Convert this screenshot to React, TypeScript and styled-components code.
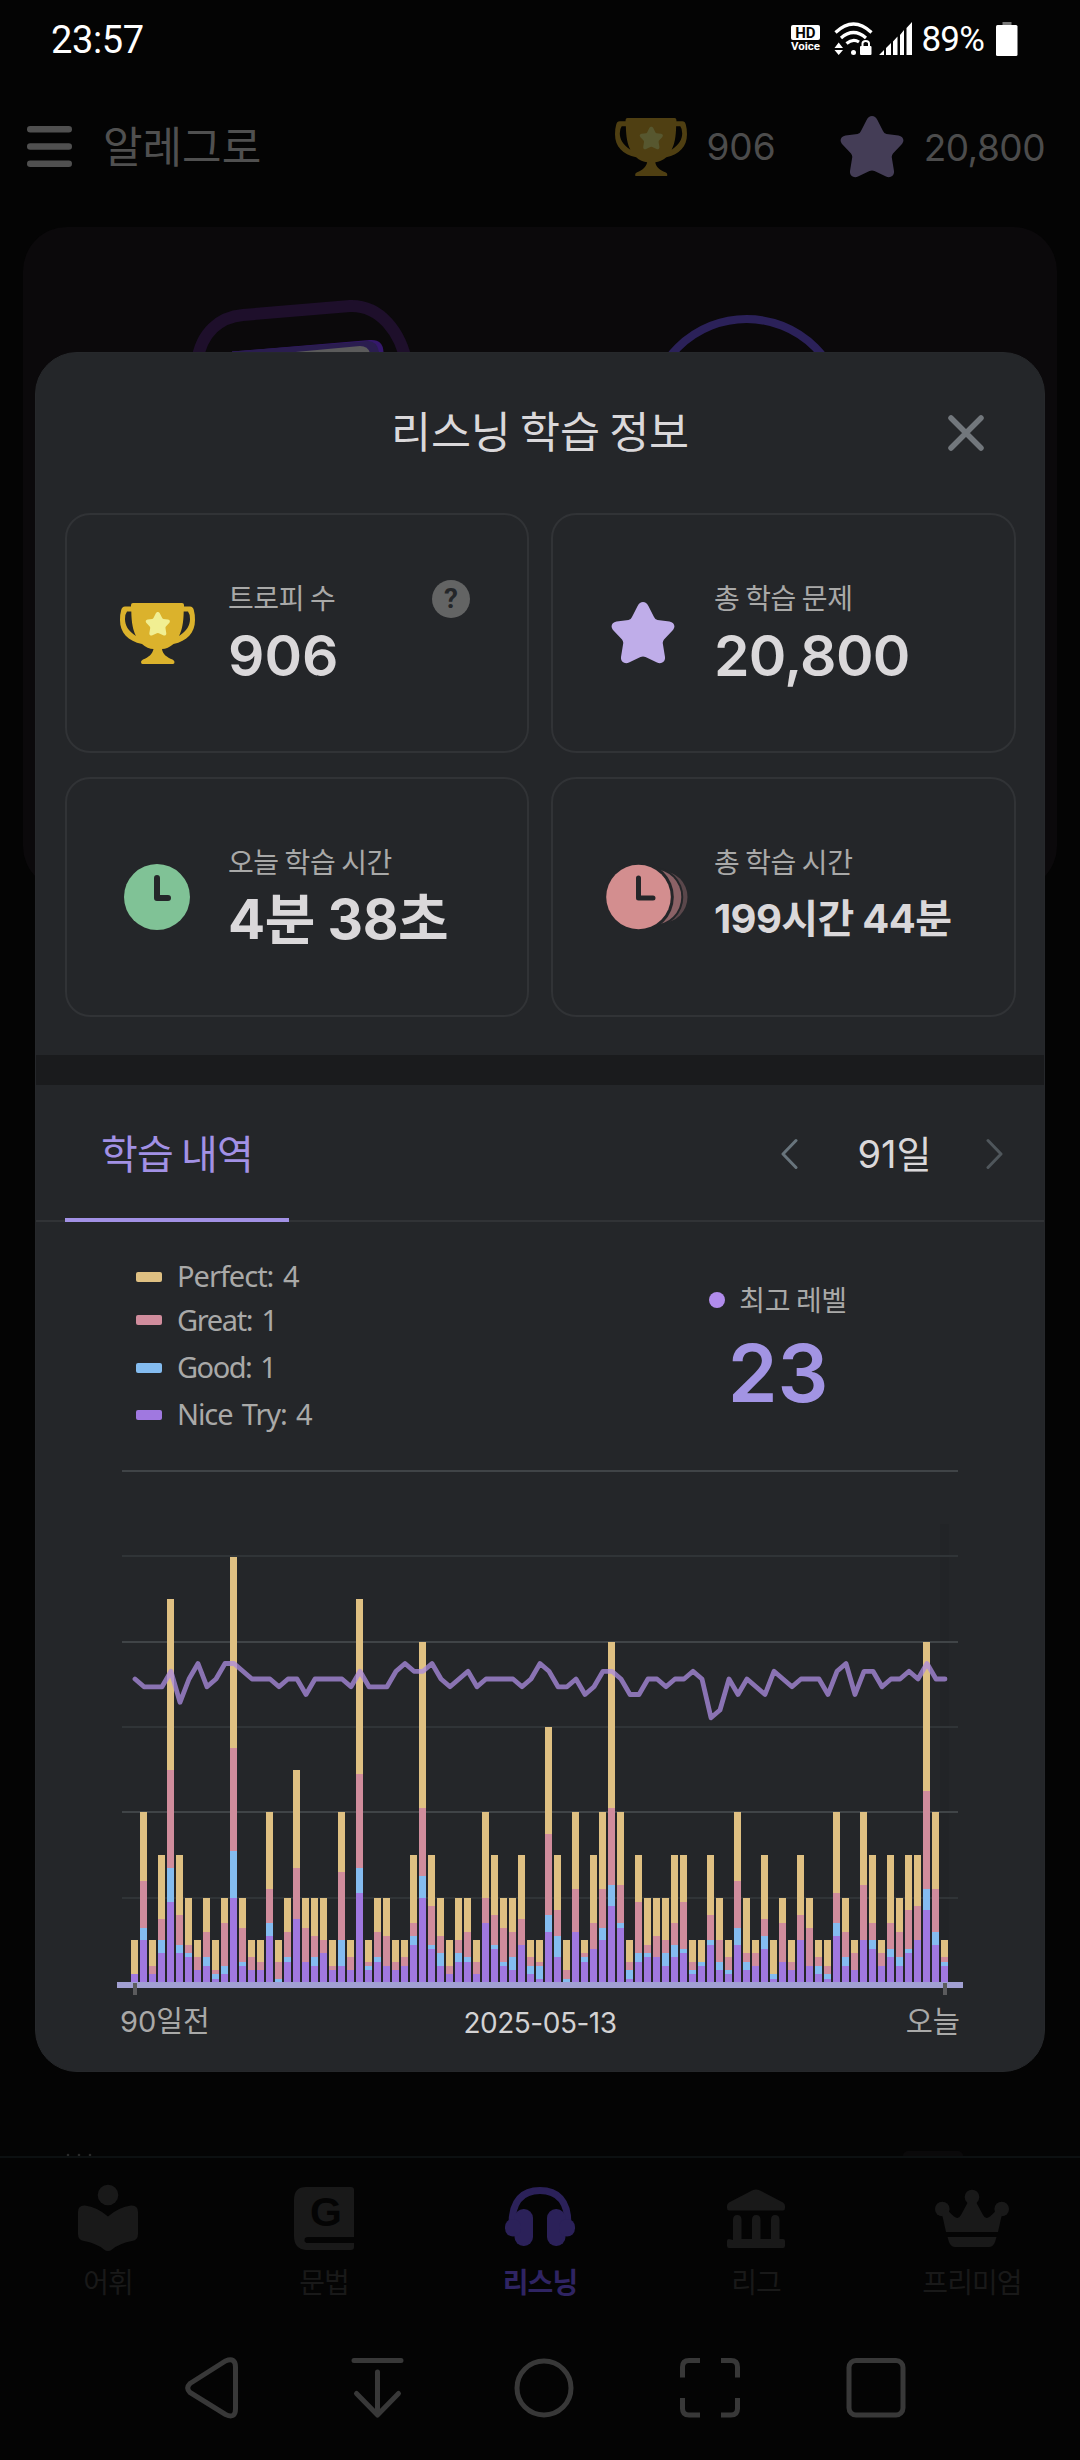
import React from 'react';
import styled, { createGlobalStyle } from 'styled-components';

const sans = `Inter, "Noto Sans CJK KR", sans-serif`;
const korean = `"Noto Sans CJK KR", sans-serif`;

const GlobalStyle = createGlobalStyle`
  * { box-sizing: border-box; }
  body { margin: 0; background: #040404; }
`;

const Screen = styled.div`
  position: relative;
  width: 1080px;
  height: 2460px;
  overflow: hidden;
  display: flex;
  flex-direction: column;
  background: #040404;
  font-family: ${sans};
`;

const Label = styled.span<{
  $size: number;
  $color: string;
  $weight?: number;
  $ls?: number;
  $ws?: number;
  $lh?: number;
  $font?: string;
  $padTop?: number;
  $padBottom?: number;
}>`
  display: block;
  box-sizing: content-box;
  font-family: ${p => p.$font ?? sans};
  font-size: ${p => p.$size}px;
  font-weight: ${p => p.$weight ?? 400};
  color: ${p => p.$color};
  letter-spacing: ${p => p.$ls ?? 0}px;
  word-spacing: ${p => p.$ws ?? 0}px;
  line-height: ${p => p.$lh ?? p.$size}px;
  padding-top: ${p => p.$padTop ?? 0}px;
  padding-bottom: ${p => p.$padBottom ?? 0}px;
  white-space: nowrap;
`;

/* ---------- Status bar ---------- */
const StatusBar = styled.div`
  height: 80px;
  display: flex;
  align-items: center;
  justify-content: space-between;
  padding: 0 62px 3px 51px;
`;
const StatusIcons = styled.div`
  display: flex;
  align-items: center;
`;
const HdBadge = styled.div`
  display: flex;
  flex-direction: column;
  align-items: center;
  width: 30px;
  margin-right: 14px;
`;
const HdBox = styled.div`
  width: 29px;
  height: 15px;
  border-radius: 2px;
  background: #fff;
  color: #040404;
  font: 700 15px/16px Roboto, sans-serif;
  text-align: center;
`;
const HdVoice = styled.div`
  color: #fff;
  font: 700 11.5px/13px Roboto, sans-serif;
`;

/* ---------- App header ---------- */
const Header = styled.header`
  height: 147px;
  display: flex;
  align-items: center;
  padding: 0 35px 13px 27px;
`;
const Counter = styled.div<{ $gap: number; $ml?: string }>`
  display: flex;
  align-items: center;
  gap: ${p => p.$gap}px;
  margin-left: ${p => p.$ml ?? '0'};
`;
const HeroCard = styled.section`
  margin: 0 23px;
  height: 663px;
  border-radius: 44px;
  background: #0b090b;
`;
const HeroArt = styled.svg`
  display: block;
`;
const PageRest = styled.div`
  flex: 1;
  display: flex;
  align-items: flex-end;
  justify-content: space-between;
  padding: 0 117px 0 65px;
`;
const PeekButton = styled.div`
  width: 60px;
  height: 5px;
  border-radius: 5px 5px 0 0;
  background: #0a090a;
`;

/* ---------- Bottom navigation ---------- */
const TabBar = styled.nav`
  height: 161px;
  border-top: 2px solid #0c1011;
  display: grid;
  grid-template-columns: repeat(5, 1fr);
`;
const TabItem = styled.div`
  display: flex;
  flex-direction: column;
  align-items: center;
  padding-top: 25px;
  gap: 11px;
`;
const SystemBar = styled.div`
  height: 143px;
  display: flex;
  justify-content: space-between;
  padding: 39px 174px 0 182px;
`;
const LetterIcon = styled.div`
  position: relative;
  height: 70px;
  width: 76px;
`;
const Letter = styled.span`
  position: absolute;
  left: 24px;
  top: 9px;
  font: 800 41px/41px "Liberation Sans", sans-serif;
  color: #040404;
`;

/* ---------- Modal ---------- */
const Modal = styled.section`
  position: absolute;
  left: 35px;
  top: 352px;
  width: 1010px;
  height: 1720px;
  border-radius: 42px;
  border: 1px solid #26282b;
  background: #242629;
  display: flex;
  flex-direction: column;
  overflow: hidden;
`;
const ModalHeader = styled.div`
  height: 160px;
  display: grid;
  grid-template-columns: 157px 1fr 157px;
  align-items: center;
  justify-items: center;
`;
const StatGrid = styled.div`
  display: grid;
  grid-template-columns: 464px 465px;
  grid-auto-rows: 240px;
  gap: 24px 22px;
  padding: 0 29px;
`;
const StatCard = styled.div`
  border: 2px solid #313336;
  border-radius: 25px;
  display: flex;
  align-items: center;
`;
const IconCell = styled.div`
  width: 84px;
  margin-left: 48px;
  margin-right: 29px;
  display: flex;
  justify-content: center;
  svg { flex-shrink: 0; }
`;
const StatText = styled.div`
  flex: 1;
  height: 106px;
  display: flex;
  flex-direction: column;
`;
const StatTop = styled.div`
  display: flex;
  align-items: center;
  justify-content: space-between;
  height: 38px;
  flex-shrink: 0;
  padding-right: 57px;
`;
const StatValue = styled.div`
  height: 74px;
  flex-shrink: 0;
  display: flex;
  align-items: center;
`;
const Help = styled.div`
  width: 38px;
  height: 38px;
  border-radius: 50%;
  background: #636464;
  color: #242629;
  text-align: center;
  font: 700 28px/38px Roboto, sans-serif;
`;
const Band = styled.div`
  height: 30px;
  margin-top: 38px;
  background: #1a1b1d;
`;
const TabRow = styled.div`
  height: 137px;
  border-bottom: 2px solid #313336;
  display: flex;
  justify-content: space-between;
  padding: 0 41px 0 29px;
`;
const ActiveTab = styled.div`
  width: 224px;
  height: 137px;
  border-bottom: 4px solid #a291e5;
  display: flex;
  align-items: center;
  justify-content: center;
`;
const Pager = styled.div`
  display: flex;
  align-items: center;
  width: 222px;
  justify-content: space-between;
  height: 137px;
`;
const PagerValue = styled.div`
  padding-left: 5px;
`;
const Summary = styled.div`
  height: 242px;
  display: flex;
  justify-content: space-between;
`;
const Legend = styled.div`
  display: flex;
  flex-direction: column;
  padding: 33px 0 0 100px;
`;
const LegendRow = styled.div<{ $h: number }>`
  display: flex;
  align-items: center;
  gap: 15px;
  height: ${p => p.$h}px;
`;
const Swatch = styled.i<{ $c: string }>`
  width: 26px;
  height: 10px;
  border-radius: 2px;
  background: ${p => p.$c};
`;
const Best = styled.div`
  width: 200px;
  margin-right: 166px;
  padding-top: 58px;
  display: flex;
  flex-direction: column;
  align-items: center;
`;
const BestTop = styled.div`
  display: flex;
  align-items: center;
  gap: 14px;
  height: 40px;
  margin-bottom: 13px;
`;
const Dot = styled.i`
  width: 16px;
  height: 16px;
  border-radius: 50%;
  background: #b18cec;
`;
const ChartSvg = styled.svg`
  display: block;
  margin-left: 81px;
`;
const AxisLabels = styled.div`
  display: grid;
  grid-template-columns: 1fr auto 1fr;
  align-items: center;
  height: 46px;
  padding: 0 84px 0 84px;
`;
const AxisEnd = styled.div`
  display: flex;
  justify-content: flex-end;
`;

/* ---------- Icons ---------- */
const starPath =
  'M26.6 4C29 -1.3 35 -1.3 37.4 4L43 15Q44 17.5 46.5 18L58.5 19.5C63.5 20.3 65 25 61.5 28.5L53 37.5Q51.5 39.5 51.8 41.5L54 55C54.5 60 50 62.5 46 60.5L34.5 55Q32 54 29.5 55L18 60.5C14 62.5 9.5 60 10 55L12.2 41.5Q12.5 39.5 11 37.5L2.5 28.5C-1 25 .5 20.3 5.5 19.5L17.5 18Q20 17.5 21 15Z';

const Star = ({ color }: { color: string }) => (
  <svg width="64" height="62" viewBox="0 0 64 62"><path d={starPath} fill={color} /></svg>
);

const Trophy = ({ w, cup, star }: { w: number; cup: string; star: string }) => (
  <svg width={w} height={(w * 61) / 75} viewBox="0 0 75 61">
    <path
      fill={cup}
      fillRule="evenodd"
      d="M11 2Q11 0 13 0H62Q64 0 64 2V3.5H70Q73 3.5 73.8 7Q75 11 75 17C75 30 67 38 53.500 41C50 44 45.500 46 42 46C42.500 51 47 54.500 52.500 56.500Q54.500 57.500 54.500 59Q54.500 61 53 61H22.500Q21 61 21 59Q21 57.500 23 56.500C28.500 54.500 32.500 51 33.500 46C30 46 25 44 22 41C8 38 0 30 0 17Q0 11 1.200 7Q2 3.500 5 3.500H11ZM7 8.500H11.300C11.500 20 13 27 16 33C8 28 5 22 5 16Q5 11 7 8.500ZM68 8.500H63.700C63.500 20 62 27 59 33C67 28 70 22 70 16Q70 11 68 8.500Z"
    />
    <path d={starPath} fill={star} transform="translate(25.5 9) scale(.385)" />
  </svg>
);

const TodayClock = () => (
  <svg width="66" height="66" viewBox="0 0 66 66">
    <circle cx="33" cy="33" r="33" fill="#80c296" />
    <path d="M33 14V34H44" fill="none" stroke="#242629" strokeWidth="6" strokeLinecap="round" strokeLinejoin="round" />
  </svg>
);

const TotalClock = () => (
  <svg width="90" height="66" viewBox="-8 0 90 66">
    <circle cx="55.500" cy="33" r="26" fill="#5a474b" />
    <circle cx="47.300" cy="33" r="30" fill="#242629" />
    <circle cx="47.300" cy="33" r="28" fill="#8b6266" />
    <circle cx="32.500" cy="33" r="35.300" fill="#242629" />
    <circle cx="32.500" cy="33" r="32.300" fill="#d38e8f" />
    <path d="M32.500 14V34H47" fill="none" stroke="#242629" strokeWidth="5" strokeLinecap="round" strokeLinejoin="round" />
  </svg>
);

const Chevron = ({ right, color }: { right?: boolean; color: string }) => (
  <svg width="17" height="32" viewBox="0 0 17 32">
    <path d={right ? 'M2 2.500L15 16L2 29.500' : 'M15 2.500L2 16L15 29.500'} fill="none" stroke={color} strokeWidth="3" strokeLinecap="round" strokeLinejoin="round" />
  </svg>
);

const WifiIcon = () => (
  <svg width="40" height="34" viewBox="0 0 40 34" fill="none">
    <g stroke="#fff" strokeWidth="3.200">
      <path d="M1.500 10.500Q19.500 -6.500 37.500 10.500" />
      <path d="M7 16Q19.500 5 32 16" />
      <path d="M12.500 21.500Q19 16 25 20" />
    </g>
    <circle cx="19.500" cy="30.500" r="2.500" fill="#fff" />
    <path d="M.5 26L4.700 20.500L9 26ZM.5 28L4.700 33L9 28Z" fill="#fff" />
    <rect x="26" y="24" width="11.500" height="9" rx="1" fill="#fff" />
    <path d="M28.500 25V21.500Q28.500 19 31.700 19Q35 19 35 21.500V25" stroke="#fff" strokeWidth="2" />
  </svg>
);

const SignalIcon = () => (
  <svg width="34" height="34" viewBox="0 0 34 34" fill="#fff">
    <path d="M0 33L5 28V33ZM7 26L12 21V33H7ZM14 19.500L18.500 14.500V33H14ZM21 13L25 8V33H21ZM27.500 6L33 0V33H27.500Z" />
  </svg>
);

const navIcons: Record<string, React.ReactNode> = {
  vocab: (
    <svg width="76" height="70" viewBox="0 0 76 70" fill="#191919">
      <circle cx="38" cy="12" r="10.300" />
      <path d="M8 29Q8 22 15 22.500Q27 24 38 33.500Q49 24 61 22.500Q68 22 68 29V51Q68 57 62 58Q50 60 42 66.500Q38 69.500 34 66.500Q26 60 14 58Q8 57 8 51Z" />
    </svg>
  ),
  grammar: (
    <LetterIcon>
      <svg width="76" height="70" viewBox="0 0 76 70" fill="#191919">
        <path d="M20 4H65Q68 4 68 7V54H22Q18.500 54 18.500 57.200Q18.500 60 22 60H68V64Q68 67 65 67H20Q8 66 8 53V17Q8 4 20 4Z" />
      </svg>
      <Letter>G</Letter>
    </LetterIcon>
  ),
  listening: (
    <svg width="76" height="70" viewBox="0 0 76 70" fill="#2b2159">
      <path d="M10 41C10 17 21 7.500 38 7.500S66 17 66 41" fill="none" stroke="#2b2159" strokeWidth="7" />
      <rect x="12.500" y="26" width="18.500" height="37" rx="9" />
      <rect x="45" y="26" width="18.500" height="37" rx="9" />
      <rect x="3" y="36" width="16" height="17.500" rx="8" />
      <rect x="57" y="36" width="16" height="17.500" rx="8" />
    </svg>
  ),
  league: (
    <svg width="76" height="70" viewBox="0 0 76 70" fill="#191919">
      <path d="M34 7.500Q38 5.500 42 7.500L65 19.500Q67 20.500 67 23V25Q67 27.500 65 27.500H11Q9 27.500 9 25V23Q9 20.500 11 19.500Z" />
      <path d="M15 57V37Q15 32 19.300 32Q23.500 32 23.500 37V56H34V37Q34 32 38.200 32Q42.500 32 42.500 37V56H53V37Q53 32 57 32Q61.500 32 61.500 37V56H65Q67 56 67 58V62.500Q67 65 65 65H11Q9 65 9 62.500V58Q9 56 11 56Z" />
    </svg>
  ),
  premium: (
    <svg width="76" height="70" viewBox="0 0 76 70" fill="#191919">
      <circle cx="38" cy="14" r="7.300" /><circle cx="8.300" cy="26" r="7.300" /><circle cx="67.700" cy="26" r="7.300" />
      <path d="M34 19H42L49 32Q51.500 37 56 33.500L64 26L68 31L64 49H12L8 31L12 26L20 33.500Q24.500 37 27 32Z" />
      <path d="M13.500 54H62.500L61 59Q59 64 55 64H21Q17 64 15 59Z" />
    </svg>
  ),
};

/* ---------- Chart ---------- */
// Cumulative counts per day: nice try, good, great, perfect
const days: [number, number, number, number][] = [
  [2,2,2,10],[10,13,24,40],[2,2,4,10],[7,10,15,30],[19,27,50,90],[7,9,16,30],[6,7,9,20],[3,3,6,10],[4,6,12,20],[1,2,3,10],
  [2,4,14,20],[20,31,55,100],[4,5,13,20],[3,3,6,10],[3,3,5,10],[11,14,22,40],[0,1,5,10],[5,6,12,20],[15,15,27,50],[5,5,13,20],
  [4,6,11,20],[7,7,10,20],[3,3,4,10],[4,10,26,40],[3,3,6,10],[21,27,49,90],[3,4,5,10],[5,6,12,20],[4,4,11,20],[3,3,5,10],
  [4,4,6,10],[9,11,14,30],[20,25,41,80],[8,9,18,30],[4,7,11,20],[2,2,4,10],[5,7,10,20],[5,6,12,20],[2,2,5,10],[14,14,20,40],
  [8,9,16,30],[4,5,13,20],[3,6,12,20],[9,9,15,30],[2,4,6,10],[1,4,5,10],[12,16,35,60],[6,11,17,30],[0,1,3,10],[12,12,22,40],
  [5,6,7,10],[8,8,14,30],[10,13,22,40],[18,23,41,80],[13,14,23,40],[1,3,5,10],[5,7,19,30],[6,7,9,20],[6,6,11,20],[4,7,10,20],
  [6,9,14,30],[7,8,19,30],[2,3,5,10],[4,5,5,10],[9,10,16,30],[3,5,10,20],[2,3,6,10],[9,13,24,40],[3,5,7,20],[4,4,7,10],
  [8,11,15,30],[1,2,2,10],[5,5,14,20],[3,3,5,10],[10,10,16,30],[4,4,13,20],[2,4,6,10],[1,2,4,10],[11,14,21,40],[4,6,12,20],
  [3,3,7,10],[10,10,23,40],[8,10,14,30],[4,4,7,10],[6,8,14,30],[4,6,12,20],[7,8,17,30],[10,10,18,30],[17,22,45,80],[9,12,22,40],
  [4,5,6,10],
];
const levels = [
  21,20,20,20,22,18,21,23,20,21,23,23,22,21,21,21,20,21,21,19,21,21,21,21,20,22,20,20,20,22,
  23,22,22,23,21,20,21,22,20,21,21,21,21,20,21,23,22,20,20,21,19,20,22,22,21,19,19,21,21,20,
  21,21,22,21,16,17,21,19,21,20,19,22,21,20,21,21,21,19,22,23,19,22,22,20,21,21,22,21,23,21,21,
];
const barColors = ['#a078e0', '#84bcf0', '#d08c9c', '#dfc082'];
const base = 519;
const yOf = (n: number) => Math.round(base - n * 4.265);

const Chart = () => (
  <ChartSvg width="846" height="534" viewBox="0 0 846 534">
    <rect x="823" y="60" width="9" height="459" fill="#222427" />
    {[6, 91, 177, 262, 347, 433].map((y, i) => (
      <rect key={y} x="5" y={y} width="836" height="2" fill={i % 2 ? '#303437' : '#404447'} />
    ))}
    {days.map((d, i) =>
      d.map((v, k) => {
        const from = k ? d[k - 1] : 0;
        return v > from ? (
          <rect key={`${i}-${k}`} x={14 + i * 9} y={yOf(v)} width="7" height={yOf(from) - yOf(v)} fill={barColors[k]} />
        ) : null;
      }),
    )}
    <polyline
      points={levels.map((l, i) => `${18 + i * 9},${(215 - (l - 21) * 7.75).toFixed(1)}`).join(' ')}
      fill="none" stroke="#ab8be0" strokeOpacity=".76" strokeWidth="4.800" strokeLinejoin="round" strokeLinecap="round"
    />
    <rect x="0" y="518" width="846" height="6" fill="#a19fd2" />
    <rect x="16" y="519" width="4" height="12" fill="#5b5b5d" />
    <rect x="826" y="519" width="4" height="12" fill="#5b5b5d" />
  </ChartSvg>
);

const legend = [
  { text: 'Perfect: 4', color: '#dfc082', h: 43, ls: -1 },
  { text: 'Great: 1', color: '#d08c9c', h: 44, ls: -1.35 },
  { text: 'Good: 1', color: '#84bcf0', h: 51, ls: -1.5 },
  { text: 'Nice Try: 4', color: '#a078e0', h: 43, ls: -1.1 },
];

const tabs = [
  { id: 'vocab', text: '어휘' },
  { id: 'grammar', text: '문법' },
  { id: 'listening', text: '리스닝', active: true },
  { id: 'league', text: '리그' },
  { id: 'premium', text: '프리미엄' },
];

const Stat = ({ icon, title, help, children }: { icon: React.ReactNode; title: string; help?: boolean; children: React.ReactNode }) => (
  <StatCard>
    <IconCell>{icon}</IconCell>
    <StatText>
      <StatTop>
        <Label $font={korean} $size={28} $ls={-0.4} $padBottom={4} $color="#a9a9a8">{title}</Label>
        {help && <Help>?</Help>}
      </StatTop>
      <StatValue>{children}</StatValue>
    </StatText>
  </StatCard>
);

export default function App() {
  return (
    <Screen>
      <GlobalStyle />
      <StatusBar>
        <Label $font="Roboto, sans-serif" $size={38} $color="#fff" $ls={-0.4} $padTop={2}>23:57</Label>
        <StatusIcons>
          <HdBadge><HdBox>HD</HdBox><HdVoice>Voice</HdVoice></HdBadge>
          <WifiIcon />
          <svg width="5" height="1" />
          <SignalIcon />
          <svg width="8" height="1" />
          <Label $font="Roboto, sans-serif" $size={35} $color="#fff" $ls={-0.8} $padTop={2}>89%</Label>
          <svg width="12" height="1" />
          <svg width="22" height="34" viewBox="0 0 22 34">
            <rect x="6.500" y="0" width="9" height="4" fill="#777" />
            <rect x="0" y="3" width="21.500" height="31" rx="1.500" fill="#fff" />
          </svg>
        </StatusIcons>
      </StatusBar>

      <Header>
        <svg width="45" height="42" viewBox="0 0 45 42" fill="#505050">
          <rect y="0" width="45" height="6.500" rx="3.200" /><rect y="17.200" width="45" height="6.500" rx="3.200" /><rect y="34.500" width="45" height="6.500" rx="3.200" />
        </svg>
        <Counter $gap={0} $ml="31px">
          <Label $font={korean} $size={43} $color="#505050" $padBottom={6}>알레그로</Label>
        </Counter>
        <Counter $gap={19} $ml="auto">
          <Trophy w={72} cup="#4f3f12" star="#57572f" />
          <Label $size={37} $color="#4c4c4c">906</Label>
        </Counter>
        <Counter $gap={20} $ml="64px">
          <Star color="#443d56" />
          <Label $size={37} $color="#4c4c4c" $ls={-0.5}>20,800</Label>
        </Counter>
      </Header>

      <HeroCard>
        <HeroArt width="1034" height="140" viewBox="23 227 1034 140">
          <path d="M197 362C201 332 220 317 243 315L350 306C380 305 401 332 407 365" fill="none" stroke="#1e0f2b" strokeWidth="12" />
          <path d="M232 351.500L370 340Q383 339 383.500 352V362H232Z" fill="#35186c" />
          <path d="M232 351.500L368 341Q377 341 379 352V362H232Z" fill="#2a1d4f" />
          <path d="M290 352.500L360 346Q368 346 370 353V362H290Z" fill="#5b5b5b" />
          <circle cx="746.600" cy="416" r="97" fill="none" stroke="#2b2159" strokeWidth="8" />
        </HeroArt>
      </HeroCard>
      <PageRest>
        <svg width="28" height="3" fill="#2a2a2a"><circle cx="3" cy="2" r="1.300" /><circle cx="14" cy="2" r="1.300" /><circle cx="25" cy="2" r="1.300" /></svg>
        <PeekButton />
      </PageRest>

      <TabBar>
        {tabs.map(t => (
          <TabItem key={t.id}>
            {navIcons[t.id]}
            <Label $font={korean} $size={28} $ls={-0.9} $lh={34} $weight={t.active ? 700 : 400} $color={t.active ? '#2f2463' : '#191919'}>{t.text}</Label>
          </TabItem>
        ))}
      </TabBar>
      <SystemBar>
        <svg width="60" height="64" viewBox="0 0 60 64" fill="none" stroke="#383838" strokeWidth="5">
          <path d="M8 27.500L43.500 5Q53.500 1 53.500 11V53Q53.500 63 43.500 58.500L8 36.500Q3.500 32 8 27.500Z" />
        </svg>
        <svg width="60" height="64" viewBox="0 0 60 64" fill="none" stroke="#383838" strokeWidth="5" strokeLinecap="round" strokeLinejoin="round">
          <path d="M6 4.500H53M29.500 16V58.500M8.500 37.500L29.500 59L50.500 37.500" />
        </svg>
        <svg width="60" height="64" viewBox="0 0 60 64" fill="none" stroke="#383838" strokeWidth="5">
          <circle cx="30" cy="32" r="27" />
        </svg>
        <svg width="60" height="64" viewBox="0 0 60 64" fill="none" stroke="#383838" strokeWidth="5">
          <path d="M2.500 21.500V11Q2.500 4.500 9 4.500H20M41 4.500H51Q57.500 4.500 57.500 11V21.500M57.500 42V52.500Q57.500 59 51 59H41M20 59H9Q2.500 59 2.500 52.500V42" />
        </svg>
        <svg width="60" height="64" viewBox="0 0 60 64" fill="none" stroke="#383838" strokeWidth="5">
          <rect x="3" y="4.500" width="54" height="54.500" rx="7" />
        </svg>
      </SystemBar>

      <Modal>
        <ModalHeader>
          <span />
          <Label $font={korean} $size={43.5} $color="#dad8da" $ls={-0.2} $padBottom={6}>리스닝 학습 정보</Label>
          <svg width="36" height="36" viewBox="0 0 36 36"><path d="M3 3L33 33M33 3L3 33" stroke="#72777c" strokeWidth="5.500" strokeLinecap="round" /></svg>
        </ModalHeader>
        <StatGrid>
          <Stat icon={<Trophy w={75} cup="#dbb22c" star="#f1ef92" />} title="트로피 수" help>
            <Label $size={57} $weight={600} $color="#dad8da">906</Label>
          </Stat>
          <Stat icon={<Star color="#bfade9" />} title="총 학습 문제">
            <Label $size={57} $weight={600} $color="#dad8da" $ls={-0.7}>20,800</Label>
          </Stat>
          <Stat icon={<TodayClock />} title="오늘 학습 시간">
            <Label $size={55} $weight={700} $color="#dad8da" $ls={-0.4}>4분 38초</Label>
          </Stat>
          <Stat icon={<TotalClock />} title="총 학습 시간">
            <Label $size={40} $weight={700} $color="#dad8da" $ls={-0.65}>199시간 44분</Label>
          </Stat>
        </StatGrid>
        <Band />
        <TabRow>
          <ActiveTab><Label $font={korean} $size={40} $color="#a291e5" $ls={-0.8} $padTop={1}>학습 내역</Label></ActiveTab>
          <Pager>
            <Chevron color="#68747c" />
            <PagerValue><Label $size={38} $color="#dad8da" $padTop={1}>91일</Label></PagerValue>
            <Chevron right color="#4f565b" />
          </Pager>
        </TabRow>
        <Summary>
          <Legend>
            {legend.map(l => (
              <LegendRow key={l.text} $h={l.h}>
                <Swatch $c={l.color} />
                <Label $font={`"Noto Sans", sans-serif`} $size={29} $ls={l.ls} $ws={3} $padBottom={2} $color="#a9a9a8">{l.text}</Label>
              </LegendRow>
            ))}
          </Legend>
          <Best>
            <BestTop><Dot /><Label $font={korean} $size={28} $ls={-0.4} $padBottom={3} $color="#a9a9a8">최고 레벨</Label></BestTop>
            <Label $size={80} $weight={600} $color="#a294e3">23</Label>
          </Best>
        </Summary>
        <Chart />
        <AxisLabels>
          <Label $size={29} $color="#a9a9a8">90일전</Label>
          <Label $size={28} $color="#d3d2d3" $ls={-0.5} $padTop={4}>2025-05-13</Label>
          <AxisEnd><Label $font={korean} $size={29.5} $color="#a9a9a8" $padBottom={3}>오늘</Label></AxisEnd>
        </AxisLabels>
      </Modal>
    </Screen>
  );
}
